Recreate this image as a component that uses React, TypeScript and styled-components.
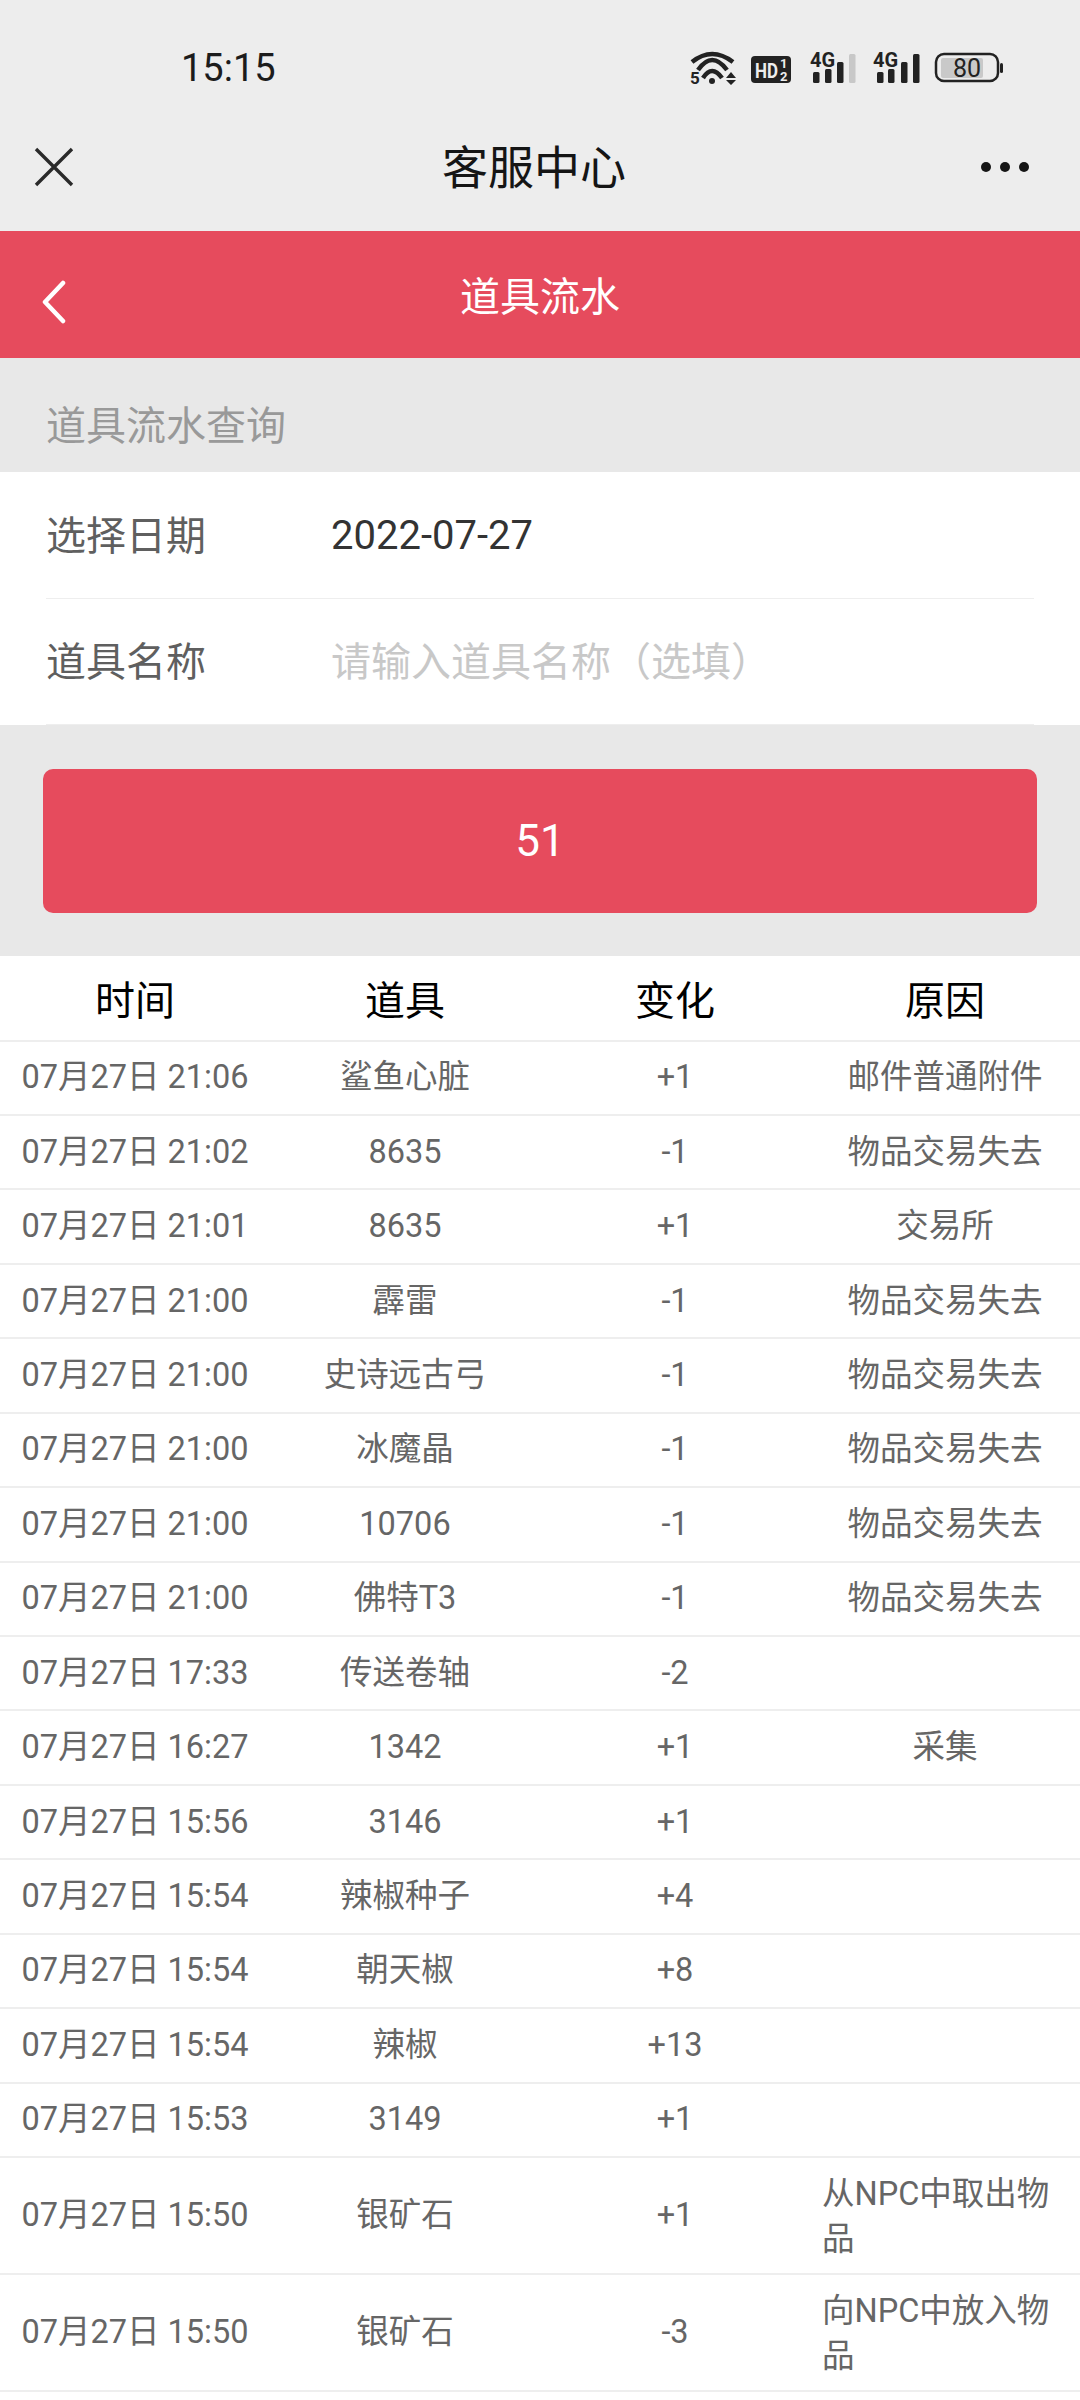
import React from 'react';
import styled, { createGlobalStyle } from 'styled-components';

const GlobalStyle = createGlobalStyle`
    html, body {
        margin: 0;
        padding: 0;
        background: #ffffff;
    }
    body {
        font-family: 'Roboto', 'Noto Sans CJK SC', sans-serif;
    }
`;

const Page = styled.div`
    width: 1080px;
    height: 2400px;
    overflow: hidden;
    background: #ffffff;
`;

const StatusBar = styled.div`
    height: 116px;
    background: #ededed;
    display: flex;
    align-items: center;
    padding: 20px 0 0 181px;
    box-sizing: border-box;
    position: relative;
`;

const Clock = styled.div`
    font-size: 38px;
    color: #1c1c1c;
    font-family: 'Roboto', sans-serif;
`;

const StatusIcons = styled.svg`
    position: absolute;
    left: 680px;
    top: 44px;
`;

const NavBar = styled.div`
    height: 115px;
    background: #ededed;
    display: flex;
    align-items: center;
    justify-content: space-between;
    padding: 0 51px 14px 33px;
    box-sizing: border-box;
    position: relative;
`;

const NavTitle = styled.div`
    position: absolute;
    left: 0;
    right: 12px;
    top: 0;
    line-height: 104px;
    text-align: center;
    font-size: 46px;
    color: #151515;
`;

const Header = styled.div`
    height: 127px;
    background: #e64b5d;
    display: flex;
    align-items: center;
    padding-left: 41px;
    position: relative;
`;

const BackIcon = styled.svg`
    margin-top: 15px;
`;

const HeaderTitle = styled.div`
    position: absolute;
    left: 0;
    right: 0;
    top: 3px;
    line-height: 127px;
    text-align: center;
    font-size: 40px;
    color: #ffffff;
`;

const SectionLabel = styled.div`
    height: 114px;
    background: #e8e8e8;
    color: #999999;
    font-size: 40px;
    line-height: 137px;
    padding-left: 46px;
    box-sizing: border-box;
`;

const Form = styled.div`
    background: #ffffff;
    padding-left: 46px;
`;

const FormRow = styled.div<{ $lift?: number }>`
    height: 126.5px;
    margin-right: 46px;
    display: flex;
    align-items: center;
    border-bottom: 1px solid #eeeeee;
    box-sizing: border-box;
    font-size: 40px;
    padding-bottom: ${props => props.$lift || 0}px;
`;

const FormLabel = styled.div<{ $raised?: boolean }>`
    width: 285px;
    color: #5f5f5f;
    margin-bottom: ${props => (props.$raised ? '3px' : '0')};
`;

const FormValue = styled.div<{ $empty?: boolean }>`
    color: ${props => (props.$empty ? '#c8c8c8' : '#333333')};
    margin-top: ${props => (props.$empty ? '0' : '2px')};
`;

const ButtonArea = styled.div`
    background: #e8e8e8;
    padding: 44px 43px;
    height: 231px;
    box-sizing: border-box;
`;

const SubmitButton = styled.div`
    height: 144px;
    border-radius: 10px;
    background: #e64b5d;
    color: #ffffff;
    font-size: 44px;
    display: flex;
    align-items: center;
    justify-content: center;
`;

const HeadRow = styled.div`
    display: grid;
    grid-template-columns: repeat(4, 25%);
    height: 85.5px;
    align-items: center;
    border-bottom: 2px solid #eeeeee;
    box-sizing: border-box;
    background: #ffffff;
`;

const HeadCell = styled.div`
    text-align: center;
    font-size: 40px;
    color: #000000;
`;

const Row = styled.div<{ $tall?: boolean }>`
    display: grid;
    grid-template-columns: repeat(4, 25%);
    height: ${props => (props.$tall ? '117px' : '74.45px')};
    align-items: center;
    border-bottom: 2px solid #eeeeee;
    box-sizing: border-box;
`;

const Cell = styled.div`
    text-align: center;
    font-size: 32.5px;
    line-height: 45px;
    color: #666666;
`;

const ReasonCell = styled(Cell)<{ $wrap?: boolean }>`
    text-align: ${props => (props.$wrap ? 'left' : 'center')};
    padding: ${props => (props.$wrap ? '2px 20px 0 12px' : '0')};
`;

const rows = [
    ['07月27日 21:06', '鲨鱼心脏', '+1', '邮件普通附件'],
    ['07月27日 21:02', '8635', '-1', '物品交易失去'],
    ['07月27日 21:01', '8635', '+1', '交易所'],
    ['07月27日 21:00', '霹雷', '-1', '物品交易失去'],
    ['07月27日 21:00', '史诗远古弓', '-1', '物品交易失去'],
    ['07月27日 21:00', '冰魔晶', '-1', '物品交易失去'],
    ['07月27日 21:00', '10706', '-1', '物品交易失去'],
    ['07月27日 21:00', '佛特T3', '-1', '物品交易失去'],
    ['07月27日 17:33', '传送卷轴', '-2', ''],
    ['07月27日 16:27', '1342', '+1', '采集'],
    ['07月27日 15:56', '3146', '+1', ''],
    ['07月27日 15:54', '辣椒种子', '+4', ''],
    ['07月27日 15:54', '朝天椒', '+8', ''],
    ['07月27日 15:54', '辣椒', '+13', ''],
    ['07月27日 15:53', '3149', '+1', ''],
    ['07月27日 15:50', '银矿石', '+1', '从NPC中取出物品'],
    ['07月27日 15:50', '银矿石', '-3', '向NPC中放入物品'],
];

const SignalBars = ({ x, xs, last }: { x: number; xs: number[]; last: string }) => {
    const tops = [28, 25, 18, 10];
    return (
        <g>
            <text x={x} y="23" fontSize="20" fontWeight="700" fill="#222" fontFamily="Roboto">
                4G
            </text>
            {xs.map((bx, i) => (
                <rect
                    key={bx}
                    x={bx}
                    y={tops[i]}
                    width="6.5"
                    height={39 - tops[i]}
                    rx="1.5"
                    fill={i === 3 ? last : '#222'}
                />
            ))}
        </g>
    );
};

const App = () => {
    return (
        <Page>
            <GlobalStyle />
            <StatusBar>
                <Clock>15:15</Clock>
                <StatusIcons width="340" height="46" viewBox="0 0 340 46">
                    <g fill="none" stroke="#222" strokeWidth="4.5">
                        <path d="M12 18 Q32 2 53 18" />
                        <path d="M18 26 Q32 6 47 26" />
                        <path d="M23 34 Q32 20 42 34" />
                    </g>
                    <circle cx="32" cy="37" r="3" fill="#222" />
                    <path d="M46 34 L51 28 L56 34 Z M46 36 L56 36 L51 41 Z" fill="#222" />
                    <text x="10" y="40" fontSize="17" fontWeight="700" fill="#222" fontFamily="Roboto">
                        5
                    </text>
                    <rect x="71" y="12" width="40" height="27" rx="4" fill="#222" />
                    <text
                        x="75"
                        y="34"
                        fontSize="21"
                        fontWeight="700"
                        fill="#ededed"
                        fontFamily="Roboto"
                        textLength="23"
                        lengthAdjust="spacingAndGlyphs"
                    >
                        HD
                    </text>
                    <text x="100" y="24" fontSize="13" fontWeight="700" fill="#ededed" fontFamily="Roboto">
                        1
                    </text>
                    <text x="100" y="37" fontSize="13" fontWeight="700" fill="#ededed" fontFamily="Roboto">
                        2
                    </text>
                    <SignalBars x={130} xs={[133, 145, 157, 169]} last="#c8c8c8" />
                    <SignalBars x={193} xs={[197, 208, 221, 233]} last="#222" />
                    <rect x="256" y="10" width="62" height="27" rx="8" fill="none" stroke="#222" strokeWidth="2.5" />
                    <rect x="261" y="14" width="42" height="20" rx="2" fill="#c9c9c9" />
                    <text x="273" y="33" fontSize="25" fill="#222" fontFamily="Roboto">
                        80
                    </text>
                    <rect x="320" y="19" width="3" height="10" rx="1.5" fill="#222" />
                </StatusIcons>
            </StatusBar>
            <NavBar>
                <svg width="42" height="42" viewBox="0 0 42 42">
                    <path d="M3 3 L39 39 M39 3 L3 39" stroke="#2a2a2a" strokeWidth="3.4" fill="none" />
                </svg>
                <NavTitle>客服中心</NavTitle>
                <svg width="48" height="12" viewBox="0 0 48 12">
                    <circle cx="5" cy="6" r="5" fill="#151515" />
                    <circle cx="24" cy="6" r="5" fill="#151515" />
                    <circle cx="43" cy="6" r="5" fill="#151515" />
                </svg>
            </NavBar>
            <Header>
                <BackIcon width="26" height="44" viewBox="0 0 26 44">
                    <path
                        d="M22 3 L4 22 L22 41"
                        stroke="#fff"
                        strokeWidth="4.5"
                        strokeLinecap="round"
                        strokeLinejoin="round"
                        fill="none"
                    />
                </BackIcon>
                <HeaderTitle>道具流水</HeaderTitle>
            </Header>
            <SectionLabel>道具流水查询</SectionLabel>
            <Form>
                <FormRow>
                    <FormLabel $raised>选择日期</FormLabel>
                    <FormValue>2022-07-27</FormValue>
                </FormRow>
                <FormRow $lift={4}>
                    <FormLabel>道具名称</FormLabel>
                    <FormValue $empty>请输入道具名称（选填）</FormValue>
                </FormRow>
            </Form>
            <ButtonArea>
                <SubmitButton>51</SubmitButton>
            </ButtonArea>
            <HeadRow>
                <HeadCell>时间</HeadCell>
                <HeadCell>道具</HeadCell>
                <HeadCell>变化</HeadCell>
                <HeadCell>原因</HeadCell>
            </HeadRow>
            {rows.map((row, i) => {
                const wrap = row[3].length > 6;
                return (
                    <Row key={i} $tall={wrap}>
                        <Cell>{row[0]}</Cell>
                        <Cell>{row[1]}</Cell>
                        <Cell>{row[2]}</Cell>
                        <ReasonCell $wrap={wrap}>{row[3]}</ReasonCell>
                    </Row>
                );
            })}
        </Page>
    );
};

export default App;
